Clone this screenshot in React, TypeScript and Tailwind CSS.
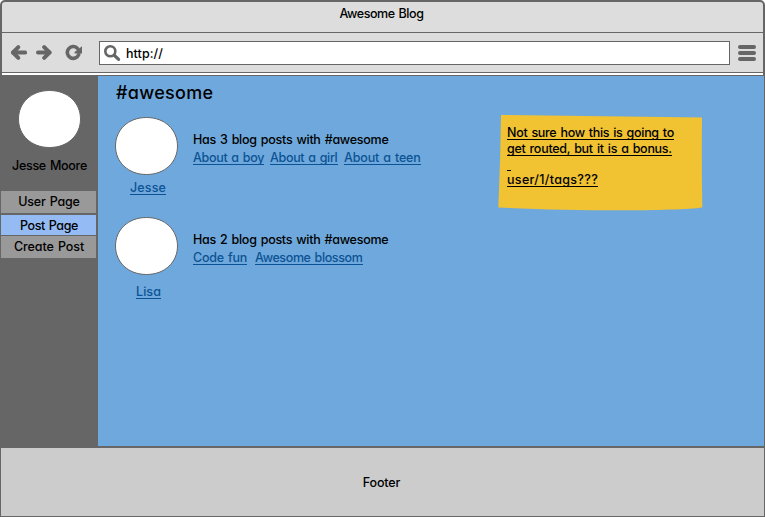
function Toolbar() {
  return (
    <div className="flex h-[39px] items-center pt-px">
      <svg className="ml-[8px] h-[18px] w-[17px]" viewBox="0 0 17 18" fill="none" stroke="#666" strokeWidth="4">
        <path d="M8.300 3.200 3 8.500 8.300 13.800" strokeLinecap="round" strokeLinejoin="round" />
        <path d="M3 8.500H15.200" strokeLinecap="round" />
      </svg>
      <svg className="ml-[8px] h-[18px] w-[17px]" viewBox="0 0 17 18" fill="none" stroke="#666" strokeWidth="4">
        <path d="M9.200 3.200 14.500 8.500 9.200 13.800" strokeLinecap="round" strokeLinejoin="round" />
        <path d="M14.500 8.500H3" strokeLinecap="round" />
      </svg>
      <svg className="ml-[13px] h-[18px] w-[18px]" viewBox="0 0 18 18">
        <path d="M12.300 4.200A5.900 5.900 0 1 0 13.700 10.600" fill="none" stroke="#666" strokeWidth="3.600" strokeLinecap="round" />
        <path d="M17 2.300v7.200H9.600V8z" fill="#666" />
      </svg>
      <div className="ml-[16px] flex h-[24px] w-[631px] items-center border border-[#666] bg-white">
        <svg className="ml-[4px] h-[17px] w-[17px]" viewBox="0 0 17 17" fill="none" stroke="#666" strokeLinecap="round">
          <circle cx="6.300" cy="6.300" r="5" strokeWidth="2.600" />
          <path d="M10.500 10.500 14.600 14.300" strokeWidth="3.200" />
        </svg>
        <span className="ml-[5px] pt-px leading-4 tracking-[0.08px]">http://</span>
      </div>
      <div className="ml-[7.5px] flex w-[18.5px] flex-col gap-[2px]">
        <div className="h-[4px] rounded-full bg-[#666]" />
        <div className="h-[4px] rounded-full bg-[#666]" />
        <div className="h-[4px] rounded-full bg-[#666]" />
      </div>
    </div>
  );
}

function Avatar({ className }: { className: string }) {
  return (
    <svg className={className} viewBox="0 0 63 58" preserveAspectRatio="none">
      <path
        d="M31.500.5C50 .5 62.500 13 62.500 29S50 57.500 31.500 57.500S.5 45 .5 29S13 .5 31.500.5Z"
        fill="#fff"
        stroke="#666"
      />
    </svg>
  );
}

function TagLink({ label, className = "" }: { label: string; className?: string }) {
  return (
    <a className={`block h-[15px] border-b border-[#0b5394] leading-4 whitespace-nowrap text-[#0b5394] ${className}`}>
      {label}
    </a>
  );
}

export default function App() {
  return (
    <div className="h-[517px] w-[765px] overflow-hidden bg-white font-['Inter',sans-serif] text-[12.5px] font-medium text-black [font-feature-settings:'cv11'] [word-spacing:1px]">
      <header className="h-[76px] rounded-t-[5px] border-x-2 border-t-2 border-b border-[#666] bg-[#ddd]">
        <div className="flex h-[31px] justify-center border-b border-[#666] pt-[4px] pr-[2px] leading-4 tracking-[-0.44px]">
          Awesome Blog
        </div>
        <Toolbar />
        <div className="h-[3px] border-t border-[#666] bg-white" />
      </header>

      <div className="flex h-[370px] border-r border-[#666]">
        <aside className="flex w-[98px] flex-col items-center bg-[#666] pt-[14px]">
          <Avatar className="ml-px h-[58px] w-[63px]" />
          <div className="mt-[10px] ml-px h-[33px] leading-4 tracking-[-0.29px]">Jesse Moore</div>
          <nav className="flex w-full flex-col pr-[2px] pl-px text-center">
            <a className="mb-[2px] h-[22px] bg-[#999] pt-[3px] pl-px leading-4 tracking-[-0.2px]">User Page</a>
            <a className="mb-px h-[20px] bg-[#94bbf4] pt-[3px] pl-px leading-4 tracking-[-0.4px]">Post Page</a>
            <a className="h-[22px] bg-[#999] pt-[3px] pl-px leading-4 tracking-[-0.09px]">Create Post</a>
          </nav>
        </aside>

        <main className="flex flex-1 bg-[#6fa8dc]">
          <div className="w-[400px] pl-[17px]">
            <h1 className="mt-[5px] h-[36px] pl-px text-[18px] leading-6 tracking-[0.3px]">#awesome</h1>
            <section className="flex h-[100px]">
              <div className="flex w-[65px] flex-col items-center">
                <Avatar className="mr-[2px] h-[58px] w-[63px]" />
                <TagLink label="Jesse" className="mt-[5px] ml-px tracking-[0.1px]" />
              </div>
              <div className="ml-[13px] pt-[14px]">
                <p className="h-[19px] pt-px leading-4 tracking-[-0.27px]">Has 3 blog posts with #awesome</p>
                <div className="flex gap-[6px]">
                  <TagLink label="About a boy" className="w-[71px] tracking-[-0.32px]" />
                  <TagLink label="About a girl" className="w-[68px] tracking-[-0.33px]" />
                  <TagLink label="About a teen" className="w-[77px] tracking-[-0.17px]" />
                </div>
              </div>
            </section>
            <section className="flex h-[100px]">
              <div className="flex w-[65px] flex-col items-center">
                <Avatar className="mr-[2px] h-[58px] w-[63px]" />
                <TagLink label="Lisa" className="mt-[9px] ml-[2px] tracking-[0.05px]" />
              </div>
              <div className="ml-[13px] pt-[14px]">
                <p className="h-[19px] pt-px leading-4 tracking-[-0.27px]">Has 2 blog posts with #awesome</p>
                <div className="flex gap-[8px]">
                  <TagLink label="Code fun" className="w-[54px] tracking-[-0.23px]" />
                  <TagLink label="Awesome blossom" className="w-[108px] tracking-[-0.38px]" />
                </div>
              </div>
            </section>
          </div>

          <div className="relative mt-[39px] h-[97px] w-[205px] pt-[10px] pl-[9px]">
            <svg className="absolute inset-0 h-full w-full" viewBox="0 0 205 97">
              <path d="M3 0 204 2.500Q203.500 50 204.300 92.500C180 96 80 96.500.3 92.500Q2.500 45 3 0Z" fill="#f1c232" />
            </svg>
            <div className="relative flex flex-col items-start whitespace-nowrap">
              <span className="h-[15px] border-b border-black leading-4 tracking-[-0.3px]">Not sure how this is going to</span>
              <span className="mt-px h-[15px] border-b border-black leading-4 tracking-[-0.28px]">get routed, but it is a bonus.</span>
              <span className="h-[15px] w-[4px] border-b border-black" />
              <span className="mt-px h-[15px] border-b border-black leading-4 tracking-[0.32px]">user/1/tags???</span>
            </div>
          </div>
        </main>
      </div>

      <footer className="flex h-[71px] justify-center border-x border-t-2 border-b border-[#666] bg-[#ccc] pt-[27px] pr-[2px] leading-4 tracking-[-0.15px]">
        Footer
      </footer>
    </div>
  );
}
